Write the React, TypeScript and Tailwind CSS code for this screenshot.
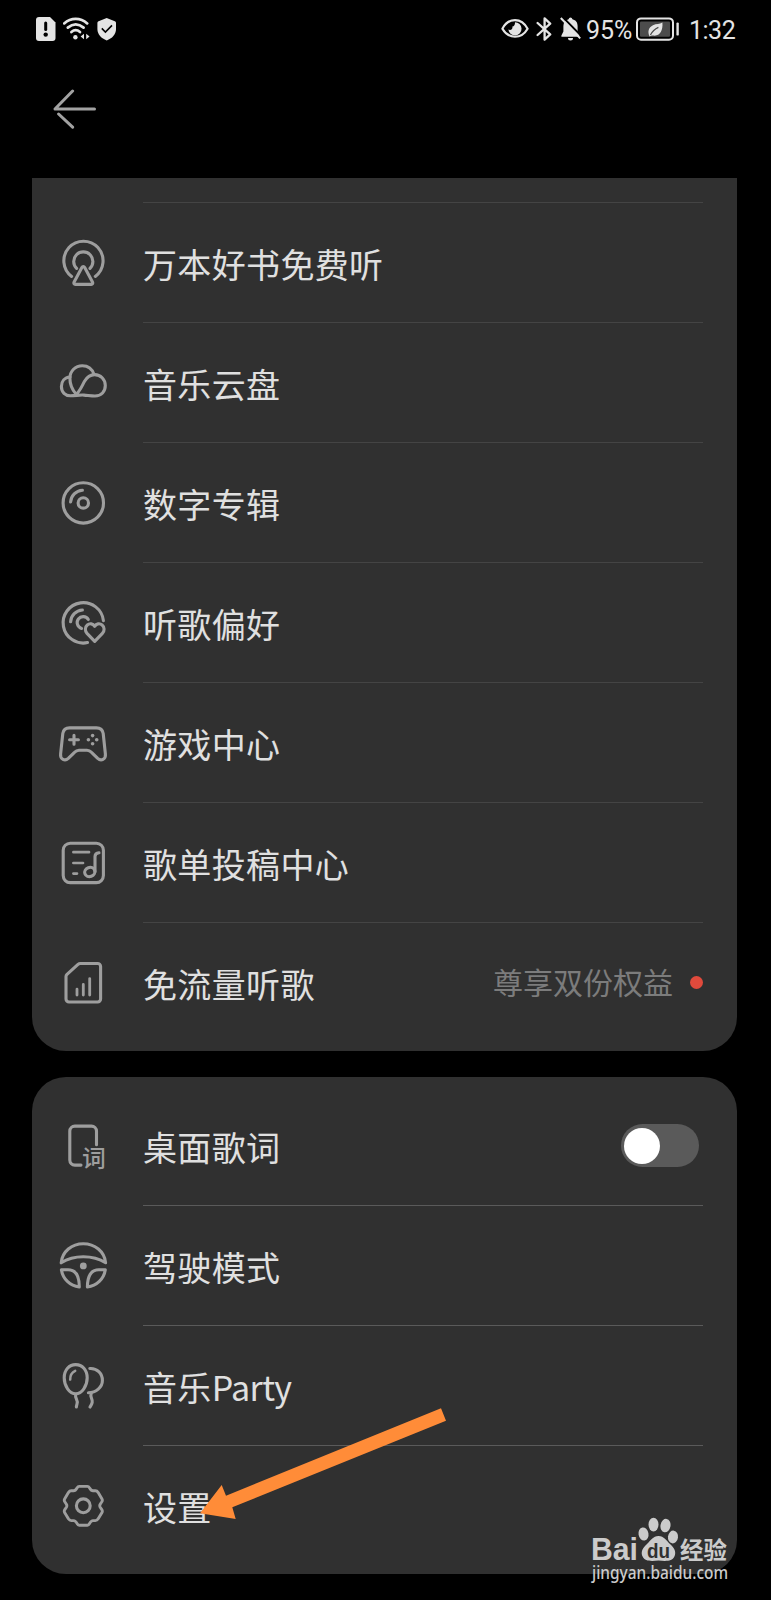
import React from "react";

const cjk = "font-['Noto_Sans_CJK_SC',sans-serif]";

interface MenuItem {
  id: string;
  label: React.ReactNode;
  icon: React.ReactNode;
  extra?: React.ReactNode;
}

function Icon({ children }: { children: React.ReactNode }) {
  return (
    <svg
      viewBox="0 0 48 48"
      className="w-12 h-12 shrink-0 overflow-visible text-[#9e9e9e]"
      fill="none"
      stroke="currentColor"
      strokeWidth="3.1"
      strokeLinecap="round"
      strokeLinejoin="round"
    >
      {children}
    </svg>
  );
}

const PodcastIcon = () => (
  <Icon>
    <path d="M12.6 38.4A19.6 19.6 0 1 1 36.3 38.4" />
    <path d="M17.6 30.4A9.6 9.6 0 1 1 31 30.4" />
    <path d="M22.9 29.4a1.6 1.6 0 0 1 2.8 0L33.6 44.2a1.5 1.5 0 0 1-1.3 2.2H16.3a1.5 1.5 0 0 1-1.3-2.2Z" />
  </Icon>
);

const CloudIcon = () => (
  <Icon>
    <path d="M11 19C5.5 19.4 2.4 23.6 2.4 28.6C2.4 34.3 6.4 37.8 11.3 37.8C17 37.8 20 36.8 25 37.1C29 37.4 32 38 36 38C42.4 38 46.3 33.5 46.3 27.6C46.3 21.3 41.5 16.6 35.7 16.6C30.5 16.6 27.6 19.6 25.4 23.5C22.5 28.8 20.5 34.5 15.8 37.3" />
    <path d="M17 36C13 31.5 10.9 26 10.9 20.3C10.9 13 16.4 7.7 23.3 7.7C29 7.7 33.3 11.2 35 16.4" />
  </Icon>
);

const DiscIcon = () => (
  <Icon>
    <circle cx="24.3" cy="24.9" r="20.2" />
    <circle cx="24.3" cy="24.9" r="5.2" />
    <path d="M11.6 24C12 17.6 17 12.5 23.4 12.2" />
  </Icon>
);

const DiscHeartIcon = () => (
  <Icon>
    <path d="M44.4 22.6A20.2 20.2 0 1 0 28.5 44.6" />
    <path d="M29.3 21.5A6 6 0 1 0 22.6 30.4" />
    <path d="M11.6 23.8C12 17.4 17 12.3 23.4 12" />
    <path d="M35.7 43.4L28 35.4C25.7 32.9 25.9 29 28.3 27C30.7 25 34 25.6 35.7 28.3C37.4 25.6 40.7 25 43.1 27C45.6 29 45.8 32.9 43.4 35.4Z" />
  </Icon>
);

const GamepadIcon = () => (
  <Icon>
    <path d="M10.5 9.9H37.5C41.5 9.9 43.6 12 44.2 15.5L46.4 36C47 41.5 42 43.3 38.7 40.4L32.5 34.3C31 32.7 29.8 32.2 28 32.2H20C18.2 32.2 17 32.7 15.5 34.3L9.3 40.4C6 43.3 1 41.5 1.6 36L3.8 15.5C4.4 12 6.5 9.9 10.5 9.9Z" />
    <path d="M15 17.4V26.2M10.6 21.8H19.4" />
    <g fill="currentColor" stroke="none">
      <circle cx="33.6" cy="17.6" r="1.8" />
      <circle cx="33.6" cy="25.8" r="1.8" />
      <circle cx="29.4" cy="21.7" r="1.8" />
      <circle cx="37.7" cy="21.7" r="1.8" />
    </g>
  </Icon>
);

const PlaylistIcon = () => (
  <Icon>
    <rect x="4.2" y="5.2" width="40.2" height="39.4" rx="7" />
    <path d="M14.4 14.2H30M14.4 25H24M14.4 35.6H18" strokeWidth="2.7" />
    <path d="M40 14.8C37.4 15 36 16.4 36 18.6V33.4" />
    <ellipse cx="30.8" cy="34" rx="5.2" ry="4.5" transform="rotate(-20 30.8 34)" />
  </Icon>
);

const SimIcon = () => (
  <Icon>
    <path d="M21.2 5.5H38.6A3 3 0 0 1 41.6 8.5V41A3 3 0 0 1 38.6 44H10A3 3 0 0 1 7 41V18.5C7 17.6 7.3 17 8 16.3L19 6.4C19.7 5.8 20.4 5.5 21.2 5.5Z" />
    <path d="M18 31.2V37M24.3 26.4V37M30.7 20.6V37" strokeWidth="2.8" />
  </Icon>
);

const LyricsIcon = () => (
  <Icon>
    <path d="M37.5 23.8V10A5 5 0 0 0 32.5 5.1H15.8A5 5 0 0 0 10.8 10V39.1A5 5 0 0 0 15.8 44.1H22" />
    <text
      x="23"
      y="46.2"
      fontSize="23.8"
      fontWeight="500"
      fill="currentColor"
      stroke="none"
      className={cjk}
    >
      词
    </text>
  </Icon>
);

const WheelIcon = () => (
  <Icon>
    <path d="M2.2 21.8C3.2 10.6 12.8 2.7 24.3 2.7C35.8 2.7 45.6 10.6 46.6 21.8C40 17.6 33 15.8 24.3 15.8C15.6 15.8 8.8 17.6 2.2 21.8Z" />
    <circle cx="24.3" cy="24.9" r="3.4" fill="currentColor" stroke="none" />
    <path d="M2.4 28.8H9C16.6 28.8 20.3 35.2 20.3 46C11 44.8 3.8 38 2.4 28.8Z" />
    <path d="M46.3 28.8H39.7C32 28.8 28.4 35.2 28.4 46C37.7 44.8 44.9 38 46.3 28.8Z" />
  </Icon>
);

const BalloonIcon = () => (
  <Icon>
    <path d="M16.7 3.6C23.2 3.6 28.2 9 28.2 16.8C28.2 24.8 23 32.8 16.7 32.8C10.4 32.8 5.2 24.8 5.2 16.8C5.2 9 10.2 3.6 16.7 3.6Z" />
    <path d="M11.2 18.6C11 14.6 13 11.4 16.2 9.8" strokeWidth="2.5" />
    <path d="M30.8 7.5C38 7 43.4 12.4 43.4 19.4C43.4 26 37 31.8 29.4 31.8" />
    <path d="M16.7 33.5C15.6 38 19.6 38.6 18 43C17.6 44.4 17.4 45.2 17.4 46" />
    <path d="M32.2 32.5C30.6 36.4 34 37.6 33.2 41.4C32.8 43.4 31.8 44.6 31 46" />
  </Icon>
);

const GearIcon = () => (
  <Icon>
    <path d="M20.2 5.4H28.4C29.4 5.4 30 6 30.6 7C31.6 8.8 32.4 9.8 34 9.8H36.4C37.6 9.8 38.4 10.4 39.2 11.6L43 18C43.6 19 43.4 19.8 42.8 20.8L41.2 23.2C40.6 24.2 40.6 25.2 41.2 26.2L42.8 28.6C43.4 29.6 43.6 30.4 43 31.4L39.2 37.8C38.4 39 37.6 39.6 36.4 39.6H34C32.4 39.6 31.6 40.6 30.6 42.4C30 43.6 29.4 44.2 28.4 44.2H20.2C19.2 44.2 18.6 43.6 18 42.4C17 40.6 16.2 39.6 14.6 39.6H12.2C11 39.6 10.2 39 9.4 37.8L5.6 31.4C5 30.4 5.2 29.6 5.8 28.6L7.4 26.2C8 25.2 8 24.2 7.4 23.2L5.8 20.8C5.2 19.8 5 19 5.6 18L9.4 11.6C10.2 10.4 11 9.8 12.2 9.8H14.6C16.2 9.8 17 8.8 18 7C18.6 6 19.2 5.4 20.2 5.4Z" strokeWidth="2.9" />
    <circle cx="24.3" cy="24.8" r="6.9" />
  </Icon>
);

function Toggle() {
  return (
    <div className="flex items-center w-[78px] h-[43px] mr-1 rounded-full bg-[#5a5a5a] pl-[3px]">
      <div className="w-9 h-9 rounded-full bg-white" />
    </div>
  );
}

const serviceItems: MenuItem[] = [
  { id: "books", label: "万本好书免费听", icon: <PodcastIcon /> },
  { id: "cloud", label: "音乐云盘", icon: <CloudIcon /> },
  { id: "album", label: "数字专辑", icon: <DiscIcon /> },
  { id: "taste", label: "听歌偏好", icon: <DiscHeartIcon /> },
  { id: "games", label: "游戏中心", icon: <GamepadIcon /> },
  { id: "playlist", label: "歌单投稿中心", icon: <PlaylistIcon /> },
  {
    id: "data",
    label: "免流量听歌",
    icon: <SimIcon />,
    extra: (
      <div className="flex items-center gap-[17px]">
        <span className="text-[30px] leading-none text-[#7c7c7c] pb-[3px]">尊享双份权益</span>
        <span className="w-[13px] h-[13px] rounded-full bg-[#e04a3c]" />
      </div>
    ),
  },
];

const toolItems: MenuItem[] = [
  { id: "lyrics", label: "桌面歌词", icon: <LyricsIcon />, extra: <Toggle /> },
  { id: "drive", label: "驾驶模式", icon: <WheelIcon /> },
  {
    id: "party",
    label: (
      <>
        音乐<span className="tracking-[-0.6px]">Party</span>
      </>
    ),
    icon: <BalloonIcon />,
  },
  { id: "settings", label: "设置", icon: <GearIcon /> },
];

function MenuRow({ item, line }: { item: MenuItem; line: string }) {
  return (
    <div className="flex items-center h-[120px] pl-[27px] pr-[34px]">
      {item.icon}
      <div className={`flex flex-1 items-center justify-between h-full ml-9 border-t ${line}`}>
        <span className="text-[34px] tracking-[0.35px] leading-none text-[#e0e0e0] pt-[3px]">{item.label}</span>
        {item.extra}
      </div>
    </div>
  );
}

function StatusBar() {
  return (
    <div className="flex items-center justify-between h-[58px] pl-9 pr-9 text-[#e4e4e4]">
      <div className="flex items-center gap-[7px]">
        <svg width="20" height="24" viewBox="0 0 20 24">
          <path d="M3 0H14L19.5 5.5V21A3 3 0 0 1 16.5 24H3A3 3 0 0 1 0 21V3A3 3 0 0 1 3 0Z" fill="currentColor" />
          <path d="M9.7 6V12.5" stroke="#000" strokeWidth="3" strokeLinecap="round" />
          <circle cx="9.7" cy="17.6" r="2.2" fill="#000" />
        </svg>
        <svg width="27" height="24" viewBox="0 0 27 24" fill="none" stroke="currentColor" strokeWidth="2.7" strokeLinecap="round">
          <path d="M1.2 6.4C8 .4 17.4 .4 24.2 6.4" />
          <path d="M4.8 10.6C9.8 6.4 15.6 6.4 20.6 10.6" />
          <path d="M8.4 15C11.2 12.6 14.2 12.6 17 15" />
          <circle cx="12.4" cy="20.2" r="2.2" fill="currentColor" stroke="none" />
          <path d="M21 16.8V22.2L17.6 19.5ZM23.2 16.8V22.2L26.6 19.5Z" fill="currentColor" stroke="none" />
        </svg>
        <svg width="20" height="24" viewBox="0 0 20 24">
          <path d="M9.7 1L17.8 4.2C18.6 4.6 19 5 19 6V12C19 17.6 15 21.4 9.7 23.4C4.4 21.4 .4 17.6 .4 12V6C.4 5 .8 4.6 1.6 4.2Z" fill="currentColor" />
          <path d="M4.8 11.4L8.4 15L15 8.4" fill="none" stroke="#000" strokeWidth="1.6" />
        </svg>
      </div>
      <div className="flex items-center text-[25px] leading-none font-['Roboto',sans-serif]">
        <svg width="28" height="24" viewBox="0 0 28 24" className="mr-[7px]">
          <path d="M1.4 11.7C7.6 .2 20.4 .2 26.6 11.7C20.4 22.4 7.6 22.4 1.4 11.7Z" fill="none" stroke="currentColor" strokeWidth="2.2" strokeLinejoin="round" />
          <path d="M14 5.2A6.6 6.6 0 1 1 7.4 12.6C9.6 13.8 12 12.4 11.4 9.6C13 9.4 14.2 7.6 14 5.2Z" fill="currentColor" />
        </svg>
        <svg width="17" height="24" viewBox="0 0 17 24" className="mr-[7px]" fill="none" stroke="currentColor" strokeWidth="2.3" strokeLinejoin="round" strokeLinecap="round">
          <path d="M1.6 6L14.2 17.4L8.6 22.6V1.4L14.2 6.6L1.6 18" />
        </svg>
        <svg width="21" height="24" viewBox="0 0 21 24" className="mr-[5px]">
          <path d="M10.5 .6A2 2 0 0 1 12.4 2.2C16 3 17.6 5.6 17.6 9V14.6L19.4 18.6V19.8H1.4V18.6L3.4 14.6V9C3.4 5.6 5.2 3 8.6 2.2A2 2 0 0 1 10.5 .6Z" fill="currentColor" />
          <path d="M8 21H13A2.5 2.5 0 0 1 8 21Z" fill="currentColor" />
          <path d="M2.4 -.2L22 19.6" stroke="#000" strokeWidth="2" />
          <path d="M.8 1L20.2 21.4" stroke="currentColor" strokeWidth="2" />
        </svg>
        <span className="w-[50px] pt-0.5">95%</span>
        <svg width="44" height="24" viewBox="0 0 44 24" className="mr-[9px]">
          <rect x="1" y="1.4" width="36" height="21.4" rx="4" fill="none" stroke="currentColor" strokeWidth="2" />
          <rect x="4" y="4.4" width="30" height="15.4" rx="1" fill="#4c4c4c" />
          <path d="M26.4 5.6C27.2 14 23.6 19.4 17.4 18.6C16 18.4 15 18.6 13.6 19.6C11.4 14.6 12.4 10.4 17 8.2C20.4 6.6 23.6 7.4 26.4 5.6Z" fill="currentColor" />
          <path d="M14.4 18C16.4 14.2 19 12 22.4 10.4" fill="none" stroke="#4c4c4c" strokeWidth="1.2" />
          <path d="M41.6 6.6V17.4" stroke="currentColor" strokeWidth="2.4" strokeLinecap="round" />
        </svg>
        <span className="w-[46px] pt-0.5 tracking-[-0.5px]">1:32</span>
      </div>
    </div>
  );
}

function Watermark() {
  return (
    <svg
      width="150"
      height="84"
      viewBox="0 0 150 84"
      fill="#cbcbcb"
      className="absolute left-[585px] top-[1512px]"
    >
      <text x="6" y="48" fontSize="31" fontWeight="700" textLength="47" lengthAdjust="spacingAndGlyphs" className="font-['Liberation_Sans',sans-serif]">
        Bai
      </text>
      <ellipse cx="58.5" cy="22" rx="5" ry="6.6" transform="rotate(-10 58.5 22)" />
      <ellipse cx="68.5" cy="12.6" rx="5" ry="6.8" />
      <ellipse cx="80.5" cy="13.6" rx="5" ry="6.8" transform="rotate(10 80.5 13.6)" />
      <ellipse cx="88" cy="25" rx="5" ry="6.4" transform="rotate(8 88 25)" />
      <path d="M73.5 24C79 24 81.4 28.6 85 32C89.4 36 91.6 40 89.4 44.6C87 49.4 81.6 49.4 73.5 48.6C65.4 49.4 60 49.4 57.6 44.6C55.4 40 57.6 36 62 32C65.6 28.6 68 24 73.5 24Z" />
      <text x="62" y="45.5" fontSize="20" fontWeight="700" fill="#303030" textLength="23" lengthAdjust="spacingAndGlyphs" className="font-['Liberation_Sans',sans-serif]">
        du
      </text>
      <text x="95" y="46.5" fontSize="23.4" fontWeight="700" className={cjk}>
        经验
      </text>
      <text x="7" y="66.5" fontSize="17.5" fontWeight="500" textLength="136" lengthAdjust="spacingAndGlyphs" className="font-['Noto_Sans',sans-serif]">
        jingyan.baidu.com
      </text>
    </svg>
  );
}

export default function App() {
  return (
    <div className={`relative w-[771px] h-[1600px] overflow-hidden bg-black ${cjk}`}>
      <StatusBar />

      <header className="flex items-center h-[120px] pl-[53px]">
        <svg width="44" height="40" viewBox="0 0 44 40" className="-mt-[18px]" fill="none" stroke="#a2a2a2" strokeWidth="3" strokeLinecap="round">
          <path d="M41.5 20H2L19.6 2" strokeLinejoin="round" />
          <path d="M5.6 25L19.6 38.2" />
        </svg>
      </header>

      <main className="flex flex-col gap-[26px] px-8">
        <section className="w-[705px] h-[873px] pt-6 rounded-b-[34px] bg-[#303030]">
          {serviceItems.map((item) => (
            <MenuRow key={item.id} item={item} line="border-[#444444]" />
          ))}
        </section>
        <section className="w-[705px] h-[497px] pt-2 rounded-[34px] bg-[#303030]">
          {toolItems.map((item, i) => (
            <MenuRow key={item.id} item={item} line={i === 0 ? "border-transparent" : "border-[#5a5a5a]"} />
          ))}
        </section>
      </main>

      {/* pointer to the settings row */}
      <svg width="250" height="116" viewBox="0 0 250 116" className="absolute left-[198px] top-[1406px]">
        <path d="M2 107.3L23.7 79L28 89.7L243 2.3L248 14.7L34.3 101.3L37.7 113Z" fill="#ff8c38" />
      </svg>
      <Watermark />
    </div>
  );
}
